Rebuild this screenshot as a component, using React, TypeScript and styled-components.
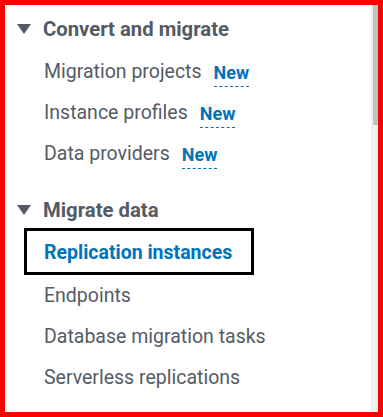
import React from "react";
import styled, { createGlobalStyle } from "styled-components";

const Global = createGlobalStyle`
  html, body { margin: 0; padding: 0; background: #ffffff; }
  * { box-sizing: border-box; }
`;

const Frame = styled.div`
  width: 383px;
  height: 417px;
  border: 5px solid #ff0000;
  display: flex;
  background: #ffffff;
  overflow: hidden;
`;

const Nav = styled.nav`
  flex: 1;
  padding: 3px 0 0 12px;
  font-family: Roboto, "Liberation Sans", Arial, sans-serif;
  font-size: 19.5px;
  color: #545b64;
`;

const Section = styled.section<{ $gap?: number }>`
  display: flex;
  flex-direction: column;
  margin-top: ${(p) => p.$gap ?? 0}px;
`;

const Heading = styled.div`
  display: flex;
  align-items: center;
  height: 41px;
  gap: 12px;
  font-weight: 700;
  font-size: 20.3px;
  color: #545b64;
`;

const Caret = styled.span`
  width: 0;
  height: 0;
  border-left: 7px solid transparent;
  border-right: 7px solid transparent;
  border-top: 10px solid #545b64;
`;

const List = styled.ul`
  list-style: none;
  margin: 2px 0 0 0;
  padding: 0;
`;

const Item = styled.li<{ $active?: boolean }>`
  display: flex;
  align-items: center;
  height: ${(p) => (p.$active ? 47 : 41)}px;
  width: ${(p) => (p.$active ? "230px" : "auto")};
  margin: ${(p) => (p.$active ? "-4px 0 0 7px" : "0")};
  padding-left: ${(p) => (p.$active ? 17 : 27)}px;
  padding-top: ${(p) => (p.$active ? 2 : 0)}px;
  border: ${(p) => (p.$active ? "3px solid #000000" : "none")};
  color: ${(p) => (p.$active ? "#0073bb" : "#545b64")};
  font-weight: ${(p) => (p.$active ? 700 : 400)};
  white-space: nowrap;
`;

const NewBadge = styled.span`
  margin-left: 12px;
  color: #0073bb;
  font-weight: 700;
  font-size: 18px;
  line-height: 20px;
  padding-bottom: 3px;
  border-bottom: 1px dashed #0073bb;
  position: relative;
  top: 3px;
`;

const Scrollbar = styled.div`
  width: 7px;
  background: #f0f0f0;
  display: flex;
  justify-content: flex-end;
`;

const Thumb = styled.div`
  width: 5px;
  height: 120px;
  background: #c1c1c1;
`;

type Entry = { label: string; isNew?: boolean; active?: boolean };

const convert: Entry[] = [
  { label: "Migration projects", isNew: true },
  { label: "Instance profiles", isNew: true },
  { label: "Data providers", isNew: true },
];

const migrate: Entry[] = [
  { label: "Replication instances", active: true },
  { label: "Endpoints" },
  { label: "Database migration tasks" },
  { label: "Serverless replications" },
];

function Group({ title, items, gap }: { title: string; items: Entry[]; gap?: number }) {
  return (
    <Section $gap={gap}>
      <Heading>
        <Caret />
        {title}
      </Heading>
      <List>
        {items.map((it) => (
          <Item key={it.label} $active={it.active}>
            {it.label}
            {it.isNew && <NewBadge>New</NewBadge>}
          </Item>
        ))}
      </List>
    </Section>
  );
}

export default function App() {
  return (
    <>
      <Global />
      <Frame>
        <Nav>
          <Group title="Convert and migrate" items={convert} />
          <Group title="Migrate data" items={migrate} gap={15} />
        </Nav>
        <Scrollbar>
          <Thumb />
        </Scrollbar>
      </Frame>
    </>
  );
}
